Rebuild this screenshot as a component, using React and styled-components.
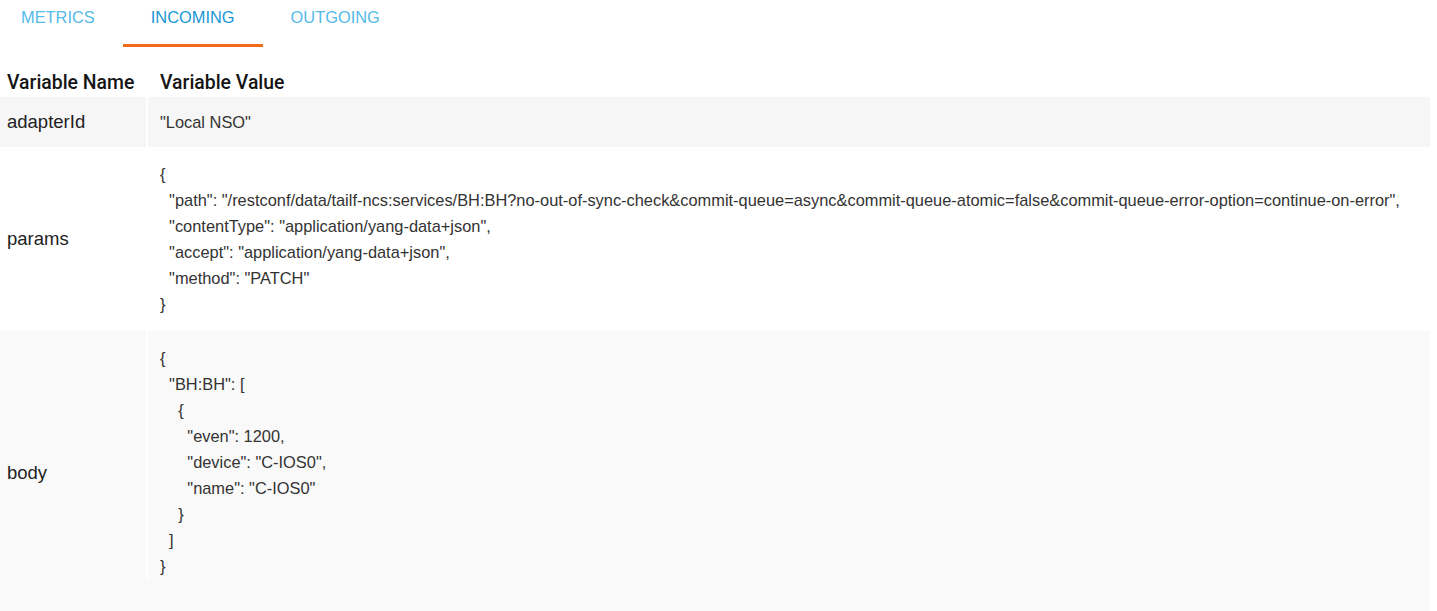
import { createGlobalStyle, styled } from "styled-components";
import { useState } from "react";

const GlobalStyle = createGlobalStyle`
  body {
    margin: 0;
    background: #fff;
    font-family: "Liberation Sans", Arial, sans-serif;
  }
`;

const tabs = ["METRICS", "INCOMING", "OUTGOING"];

const paramsValue = `{
  "path": "/restconf/data/tailf-ncs:services/BH:BH?no-out-of-sync-check&commit-queue=async&commit-queue-atomic=false&commit-queue-error-option=continue-on-error",
  "contentType": "application/yang-data+json",
  "accept": "application/yang-data+json",
  "method": "PATCH"
}`;

const bodyValue = `{
  "BH:BH": [
    {
      "even": 1200,
      "device": "C-IOS0",
      "name": "C-IOS0"
    }
  ]
}`;

const rows = [
  { name: "adapterId", value: '"Local NSO"', bg: "#f6f6f6" },
  { name: "params", value: paramsValue, bg: "#fff", block: true, bottom: 14 },
  { name: "body", value: bodyValue, bg: "#f9f9f9", block: true, bottom: 0, minHeight: 284 },
];

export default function App() {
  const [active, setActive] = useState("INCOMING");

  return (
    <>
      <GlobalStyle />
      <Page>
        <TabBar>
          {tabs.map((t) => (
            <Tab key={t} $active={t === active} onClick={() => setActive(t)}>
              {t}
            </Tab>
          ))}
        </TabBar>

        <Table>
          <HeaderRow>
            <HeaderCell>Variable Name</HeaderCell>
            <HeaderCell $value>Variable Value</HeaderCell>
          </HeaderRow>
          {rows.map((r) => (
            <Row key={r.name} $bg={r.bg} $minHeight={r.minHeight || 0}>
              <NameCell>{r.name}</NameCell>
              <ValueCell $block={r.block} $bottom={r.bottom}>
                {r.value}
              </ValueCell>
            </Row>
          ))}
        </Table>
      </Page>
    </>
  );
}

const Page = styled.div`
  display: flex;
  flex-direction: column;
  padding-right: 7px;
`;

const TabBar = styled.div`
  display: flex;
  margin-left: -7px;
  height: 47px;
`;

const Tab = styled.div`
  padding: 8px 28px 0;
  height: 47px;
  box-sizing: border-box;
  font-size: 16.4px;
  line-height: 19px;
  color: ${(p) => (p.$active ? "#1897d4" : "#55bbe8")};
  border-bottom: 3px solid ${(p) => (p.$active ? "#f26b1d" : "transparent")};
  cursor: pointer;
`;

const Table = styled.div`
  display: flex;
  flex-direction: column;
`;

const HeaderRow = styled.div`
  display: grid;
  grid-template-columns: 146px 1fr;
  column-gap: 2px;
  padding-top: 21px;
  height: 50px;
  box-sizing: border-box;
`;

const HeaderCell = styled.div`
  font-family: Roboto, "Liberation Sans", sans-serif;
  font-weight: 500;
  font-size: 19.4px;
  line-height: 29px;
  color: #151515;
  padding-left: ${(p) => (p.$value ? "12px" : "7px")};
`;

const Row = styled.div`
  display: grid;
  grid-template-columns: 146px 1fr;
  align-items: start;
  min-height: ${(p) => p.$minHeight}px;
  background: ${(p) => p.$bg};
`;

const NameCell = styled.div`
  align-self: stretch;
  display: flex;
  align-items: center;
  padding-left: 7px;
  font-size: 18.5px;
  color: #222;
`;

const ValueCell = styled.div`
  border-left: 2px solid #fff;
  padding: ${(p) => (p.$block ? "14px 12px" : "12px")};
  padding-bottom: ${(p) => (p.$block ? p.$bottom : 12)}px;
  font-size: 16.4px;
  line-height: 26px;
  color: #333;
  white-space: pre;
`;
